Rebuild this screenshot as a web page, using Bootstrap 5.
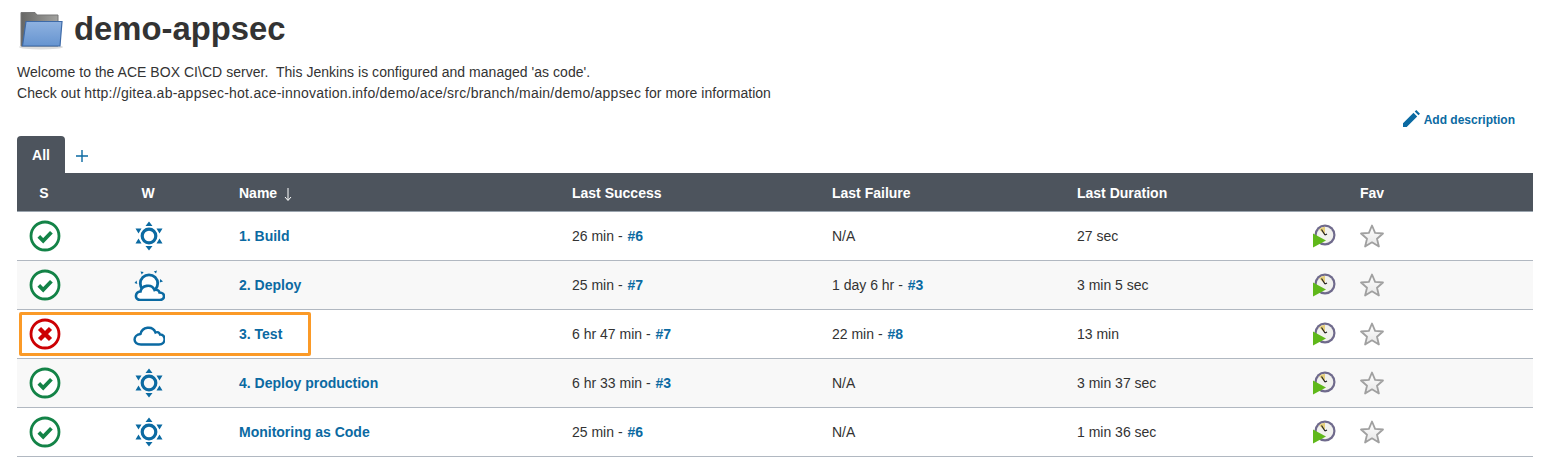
<!DOCTYPE html>
<html lang="en">
<head>
  <meta charset="UTF-8" />
  <title>demo-appsec</title>
  <link href="https://cdn.jsdelivr.net/npm/bootstrap@5.3.3/dist/css/bootstrap.min.css" rel="stylesheet" />
  <style>
    body { background: #fff; color: #333; font-family: "Liberation Sans", Arial, sans-serif; font-size: 14px; line-height: 19px; height: 462px; overflow: hidden; }
    a { color: #0b6aa2; text-decoration: none; font-weight: 700; }
    symbol { overflow: visible; }
    .page-wrap { position: relative; padding: 0 9px 0 17px; }
    .view-head { height: 62px; padding-bottom: 3px; }
    .view-title { font-size: 32.8px; font-weight: 700; line-height: 36px; margin: -2px 0 0 1px; color: #333; }
    .view-desc { height: 42px; line-height: 21px; letter-spacing: .03px; }
    .desc-url { letter-spacing: .24px; }
    .add-row { height: 32px; padding-right: 18px; padding-top: 7px; font-size: 12px; }
    .add-row svg { margin-top: -1px; }
    .tab-row { height: 37px; }
    .tab-on { width: 48px; height: 37px; padding-top: 2px; background: #4d545d; color: #fff; font-weight: 700; border-radius: 4px 4px 0 0; }
    .tab-add { width: 34px; height: 37px; padding-top: 2px; color: #0b6aa2; }
    .job-table { table-layout: fixed; width: 1516px; border-collapse: collapse; margin: 0; }
    .job-table th { background: #4d545d; color: #fff; font-weight: 700; height: 38px; padding: 4px 0 0 14px; vertical-align: middle; border: 0; border-bottom: 1px solid #9aa4ae; }
    .job-table td { height: 49px; padding: 1px 0 0 14px; vertical-align: middle; border: 0; border-bottom: 1px solid #b1b8c1; background: transparent; color: #333; box-shadow: none; }
    .job-table th.mid { padding: 4px 0 0; text-align: center; }
    .job-table td.mid { padding: 0 0 0 1px; text-align: center; }
    .job-table tbody tr:nth-child(even) td { background: #f8f8f8; }
    .job-table td svg { display: block; }
    .job-table td.mid svg { margin: 0 auto; }
    .sort-arrow { margin-left: 3px; vertical-align: -3px; }
    .run-no { margin-left: 1px; }
    .highlight-box { position: absolute; left: 19px; top: 312px; width: 292px; height: 44px; border: 3px solid #fb9a27; border-radius: 2px; pointer-events: none; }
  </style>
</head>
<body>
  <svg width="0" height="0" class="d-block position-absolute">
    <defs>
      <linearGradient id="folderBack" x1="0" y1="0" x2="1" y2="0">
        <stop offset="0" stop-color="#666664"/><stop offset="1" stop-color="#a3a3a0"/>
      </linearGradient>
      <linearGradient id="folderFront" x1="0" y1="0" x2="0" y2="1">
        <stop offset="0" stop-color="#8fb2e0"/><stop offset="1" stop-color="#6694d0"/>
      </linearGradient>
      <linearGradient id="starFill" x1="0" y1="0" x2="0" y2="1">
        <stop offset="0" stop-color="#ffffff"/><stop offset="1" stop-color="#e6e6e6"/>
      </linearGradient>
      <symbol id="ic-ok" viewBox="0 0 32 32">
        <circle cx="16" cy="16" r="14" fill="#fff" stroke="#138347" stroke-width="2.8"/>
        <path d="M9.800 16.400l4.400 4.400 8.200-8.600" fill="none" stroke="#138347" stroke-width="3.800"/>
      </symbol>
      <symbol id="ic-fail" viewBox="0 0 32 32">
        <circle cx="16" cy="16" r="14" fill="#fff" stroke="#cc0003" stroke-width="2.8"/>
        <path d="M10.500 10.500l11 11M21.500 10.500l-11 11" fill="none" stroke="#cc0003" stroke-width="4.400"/>
      </symbol>
      <symbol id="ic-sun" viewBox="0 0 32 32">
        <circle cx="16" cy="16" r="6.800" fill="none" stroke="#0b6aa2" stroke-width="3.200"/>
        <path fill="#0b6aa2" d="M16 1.500l3.500 4.500h-7zM16 30.500l-3.500-4.500h7zM2.500 8.500h6l-3 5zM29.500 8.500h-6l3 5zM2.500 23.500l3-5 3 5zM29.500 23.500l-3-5-3 5z"/>
      </symbol>
      <symbol id="ic-partly" viewBox="0 0 32 32">
        <circle cx="16" cy="14.500" r="8.700" fill="#fff" stroke="#0b6aa2" stroke-width="2.800"/>
        <path d="M7 31c-5.500 0-5.500-8 .5-8.500 1-6 11-8.500 14-1.500 2-.8 4.500.3 5 2.500 6 0 6 7.500 0 7.500z" fill="#fff" stroke="#0b6aa2" stroke-width="2.600"/>
        <path fill="#0b6aa2" d="M7.500 2.500l3.200.6-2 2.400zM24 1.500l-3.200 1 2.200 2zM1.500 14l2-2.500.8 3.500zM30 12.500l-2.800-2.500-.5 3.500z"/>
      </symbol>
      <symbol id="ic-cloud" viewBox="0 0 32 32">
        <path d="M8 26.500c-8.500 0-8.500-9.500-.5-10.500 1.500-7 12-9 15-1.500 2-1 4 0 4.500 2 6-.5 6.500 10-1 10z" fill="#fff" stroke="#0b6aa2" stroke-width="2.400"/>
      </symbol>
      <symbol id="ic-build" viewBox="0 0 24 24">
        <circle cx="13" cy="11" r="10.500" fill="#6f6a8c"/>
        <circle cx="13" cy="11" r="8.300" fill="#f1f1ee"/>
        <path d="M13 2.700a8.300 8.300 0 0 0-6 2.600l6 5.700z" fill="#e5cf7c"/>
        <path d="M13 11L9.500 5.500M13 11l2-1" stroke="#222" stroke-width="1.200" fill="none"/>
        <path d="M1 9.500v14l13-7z" fill="#5fb81a"/>
      </symbol>
      <symbol id="ic-star" viewBox="0 0 24 24">
        <path d="M12 1.500l3.100 7.400 7.900.6-6 5.200 1.900 7.800L12 18.300l-6.900 4.200L7 14.700 1 9.500l7.900-.6z" fill="url(#starFill)" stroke="#a0a0a0" stroke-width="1.800" stroke-linejoin="round"/>
      </symbol>
    </defs>
  </svg>

  <div class="page-wrap">
    <div class="view-head d-flex align-items-center gap-2">
      <svg width="48" height="42" viewBox="0 0 48 42">
        <ellipse cx="24" cy="38" rx="22" ry="2.500" fill="#ddd"/>
        <path d="M4 3.500h14l2 2.500h21v31H4z" fill="url(#folderBack)" stroke="#777" stroke-width="1"/>
        <path d="M9 12.500h36l-2 24.500H5.500z" fill="url(#folderFront)" stroke="#3d6aa8" stroke-width="1.200"/>
      </svg>
      <h1 class="view-title">demo-appsec</h1>
    </div>
    <div class="view-desc">
      Welcome to the ACE BOX CI\CD server.&nbsp; This Jenkins is configured and managed 'as code'.<br>
      Check out <span class="desc-url">http://gitea.ab-appsec-hot.ace-innovation.info/demo/ace/src/branch/main/demo/appsec</span> for more information
    </div>
    <div class="add-row d-flex justify-content-end align-items-start gap-1">
      <svg width="17" height="17" viewBox="0 0 17 17"><path fill="#0b6aa2" d="M0 17v-3.700L10.500 2.800l3.700 3.700L3.700 17zM11.700 1.600L13.300 0 17 3.700l-1.600 1.600z"/></svg>
      <a href="#">Add description</a>
    </div>
    <div class="tab-row d-flex">
      <div class="tab-on d-flex align-items-center justify-content-center">All</div>
      <a class="tab-add d-flex align-items-center justify-content-center" href="#">
        <svg width="12" height="12" viewBox="0 0 12 12"><path d="M6 0v12M0 6h12" stroke="#0b6aa2" stroke-width="1.400"/></svg>
      </a>
    </div>
    <table class="table job-table">
      <colgroup>
        <col style="width:54px"><col style="width:154px"><col style="width:333px"><col style="width:260px"><col style="width:245px"><col style="width:235px"><col style="width:48px"><col>
      </colgroup>
      <thead>
        <tr>
          <th class="mid">S</th><th class="mid">W</th>
          <th>Name <svg class="sort-arrow" width="8" height="13" viewBox="0 0 8 13"><path d="M4 0v12M1 9l3 3.500L7 9" fill="none" stroke="#fff" stroke-width="1"/></svg></th>
          <th>Last Success</th><th>Last Failure</th><th>Last Duration</th><th></th><th>Fav</th>
        </tr>
      </thead>
      <tbody id="jobRows"></tbody>
    </table>
    <div class="highlight-box"></div>
  </div>

  <script>
    const jobs = [
      { s: "ok", w: "sun", name: "1. Build", ok: "26 min", okNo: 6, fail: "N/A", dur: "27 sec" },
      { s: "ok", w: "partly", name: "2. Deploy", ok: "25 min", okNo: 7, fail: "1 day 6 hr", failNo: 3, dur: "3 min 5 sec" },
      { s: "fail", w: "cloud", name: "3. Test", ok: "6 hr 47 min", okNo: 7, fail: "22 min", failNo: 8, dur: "13 min" },
      { s: "ok", w: "sun", name: "4. Deploy production", ok: "6 hr 33 min", okNo: 3, fail: "N/A", dur: "3 min 37 sec" },
      { s: "ok", w: "sun", name: "Monitoring as Code", ok: "25 min", okNo: 6, fail: "N/A", dur: "1 min 36 sec" },
    ];

    const icon = (id, size) => `<svg width="${size}" height="${size}"><use href="#ic-${id}"/></svg>`;

    document.getElementById("jobRows").innerHTML = jobs.map(j => `
      <tr>
        <td class="mid">${icon(j.s, 32)}</td>
        <td class="mid">${icon(j.w, 32)}</td>
        <td><a href="#">${j.name}</a></td>
        <td>${j.ok} - <a class="run-no" href="#">#${j.okNo}</a></td>
        <td>${j.failNo ? `${j.fail} - <a class="run-no" href="#">#${j.failNo}</a>` : j.fail}</td>
        <td>${j.dur}</td>
        <td>${icon("build", 24)}</td>
        <td>${icon("star", 24)}</td>
      </tr>`).join("");
  </script>
  <script src="https://cdn.jsdelivr.net/npm/bootstrap@5.3.3/dist/js/bootstrap.bundle.min.js"></script>
</body>
</html>
